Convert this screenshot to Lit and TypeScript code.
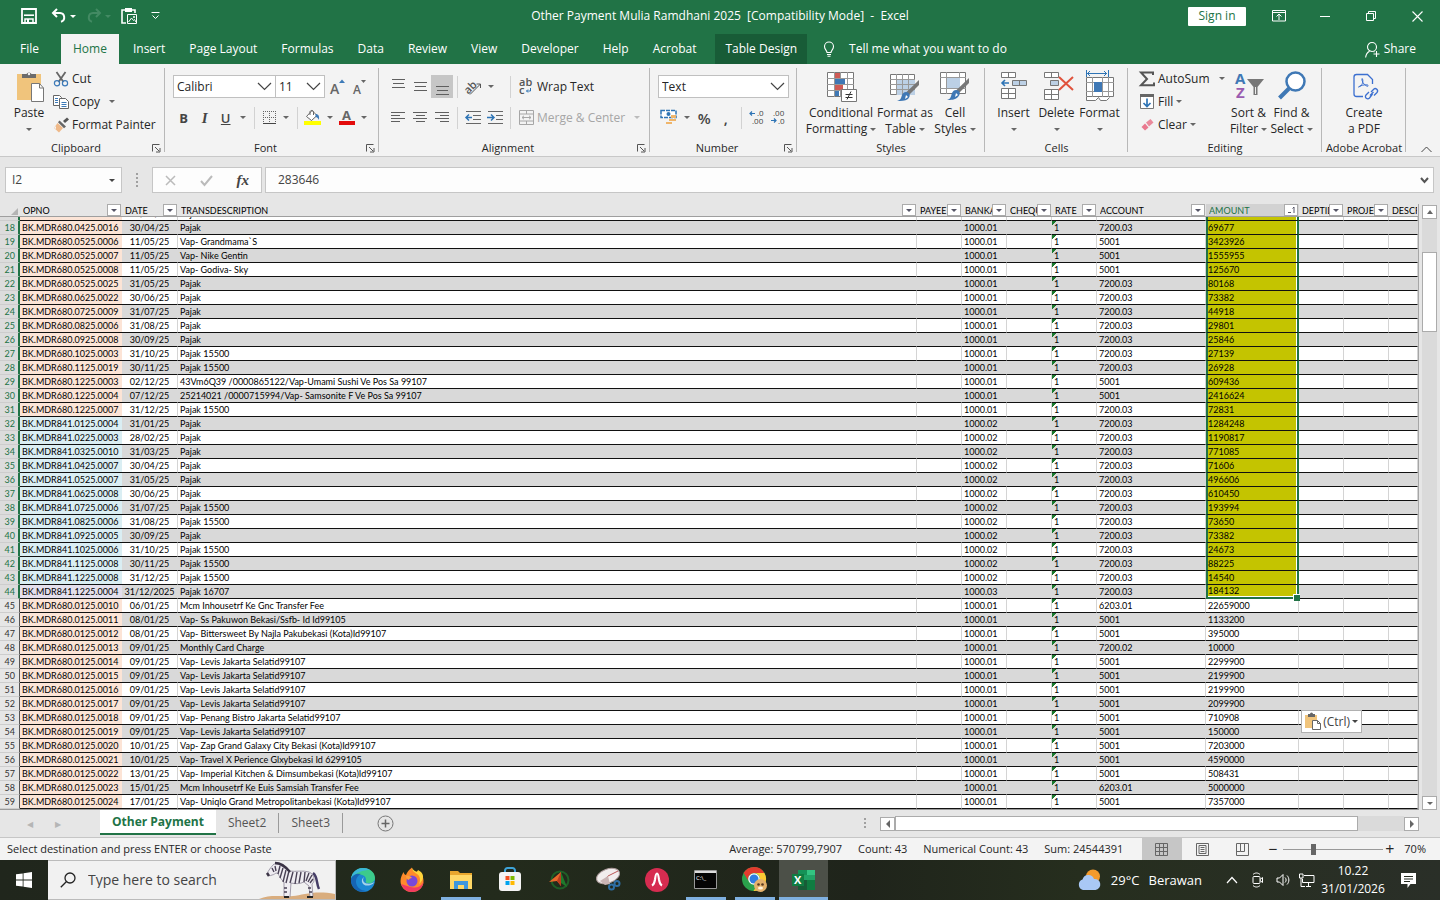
import { LitElement, html, svg, css, nothing } from "lit";
import { customElement, state } from "lit/decorators.js";
import { classMap } from "lit/directives/class-map.js";

type Row = [number, string, string, string, string, string, string];

const P = "BK.MDR680.";
const M = "BK.MDR841.";
const rows: Row[] = [
  [18, P + "0425.0016", "30/04/25", "Pajak", "1000.01", "7200.03", "69677"],
  [19, P + "0525.0006", "11/05/25", "Vap- Grandmama`S", "1000.01", "5001", "3423926"],
  [20, P + "0525.0007", "11/05/25", "Vap- Nike Gentin", "1000.01", "5001", "1555955"],
  [21, P + "0525.0008", "11/05/25", "Vap- Godiva- Sky", "1000.01", "5001", "125670"],
  [22, P + "0525.0025", "31/05/25", "Pajak", "1000.01", "7200.03", "80168"],
  [23, P + "0625.0022", "30/06/25", "Pajak", "1000.01", "7200.03", "73382"],
  [24, P + "0725.0009", "31/07/25", "Pajak", "1000.01", "7200.03", "44918"],
  [25, P + "0825.0006", "31/08/25", "Pajak", "1000.01", "7200.03", "29801"],
  [26, P + "0925.0008", "30/09/25", "Pajak", "1000.01", "7200.03", "25846"],
  [27, P + "1025.0003", "31/10/25", "Pajak 15500", "1000.01", "7200.03", "27139"],
  [28, P + "1125.0019", "30/11/25", "Pajak 15500", "1000.01", "7200.03", "26928"],
  [29, P + "1225.0003", "02/12/25", "43Vm6Q39 /0000865122/Vap-Umami Sushi Ve Pos Sa 99107", "1000.01", "5001", "609436"],
  [30, P + "1225.0004", "07/12/25", "25214021 /0000715994/Vap- Samsonite F Ve Pos Sa 99107", "1000.01", "5001", "2416624"],
  [31, P + "1225.0007", "31/12/25", "Pajak 15500", "1000.01", "7200.03", "72831"],
  [32, M + "0125.0004", "31/01/25", "Pajak", "1000.02", "7200.03", "1284248"],
  [33, M + "0225.0003", "28/02/25", "Pajak", "1000.02", "7200.03", "1190817"],
  [34, M + "0325.0010", "31/03/25", "Pajak", "1000.02", "7200.03", "771085"],
  [35, M + "0425.0007", "30/04/25", "Pajak", "1000.02", "7200.03", "71606"],
  [36, M + "0525.0007", "31/05/25", "Pajak", "1000.02", "7200.03", "496606"],
  [37, M + "0625.0008", "30/06/25", "Pajak", "1000.02", "7200.03", "610450"],
  [38, M + "0725.0006", "31/07/25", "Pajak 15500", "1000.02", "7200.03", "193994"],
  [39, M + "0825.0006", "31/08/25", "Pajak 15500", "1000.02", "7200.03", "73650"],
  [40, M + "0925.0005", "30/09/25", "Pajak", "1000.02", "7200.03", "73382"],
  [41, M + "1025.0006", "31/10/25", "Pajak 15500", "1000.02", "7200.03", "24673"],
  [42, M + "1125.0008", "30/11/25", "Pajak 15500", "1000.02", "7200.03", "88225"],
  [43, M + "1225.0008", "31/12/25", "Pajak 15500", "1000.02", "7200.03", "14540"],
  [44, M + "1225.0004", "31/12/2025", "Pajak 16707", "1000.03", "7200.03", "184132"],
  [45, P + "0125.0010", "06/01/25", "Mcm Inhousetrf Ke Gnc Transfer Fee", "1000.01", "6203.01", "22659000"],
  [46, P + "0125.0011", "08/01/25", "Vap- Ss Pakuwon Bekasi/Ssfb- Id Id99105", "1000.01", "5001", "1133200"],
  [47, P + "0125.0012", "08/01/25", "Vap- Bittersweet By Najla Pakubekasi (Kota)Id99107", "1000.01", "5001", "395000"],
  [48, P + "0125.0013", "09/01/25", "Monthly Card Charge", "1000.01", "7200.02", "10000"],
  [49, P + "0125.0014", "09/01/25", "Vap- Levis Jakarta Selatid99107", "1000.01", "5001", "2299900"],
  [50, P + "0125.0015", "09/01/25", "Vap- Levis Jakarta Selatid99107", "1000.01", "5001", "2199900"],
  [51, P + "0125.0016", "09/01/25", "Vap- Levis Jakarta Selatid99107", "1000.01", "5001", "2199900"],
  [52, P + "0125.0017", "09/01/25", "Vap- Levis Jakarta Selatid99107", "1000.01", "5001", "2099900"],
  [53, P + "0125.0018", "09/01/25", "Vap- Penang Bistro Jakarta Selatid99107", "1000.01", "5001", "710908"],
  [54, P + "0125.0019", "09/01/25", "Vap- Levis Jakarta Selatid99107", "1000.01", "5001", "150000"],
  [55, P + "0125.0020", "10/01/25", "Vap- Zap Grand Galaxy City Bekasi (Kota)Id99107", "1000.01", "5001", "7203000"],
  [56, P + "0125.0021", "10/01/25", "Vap- Travel X Perience Glxybekasi Id 6299105", "1000.01", "5001", "4590000"],
  [57, P + "0125.0022", "13/01/25", "Vap- Imperial Kitchen & Dimsumbekasi (Kota)Id99107", "1000.01", "5001", "508431"],
  [58, P + "0125.0023", "15/01/25", "Mcm Inhousetrf Ke Euis Samsiah Transfer Fee", "1000.01", "6203.01", "5000000"],
  [59, P + "0125.0024", "17/01/25", "Vap- Uniqlo Grand Metropolitanbekasi (Kota)Id99107", "1000.01", "5001", "7357000"],
];

const columns = ["OPNO", "DATE", "TRANSDESCRIPTION", "PAYEE", "BANKA", "CHEQU", "RATE", "ACCOUNT", "AMOUNT", "DEPTID", "PROJEC", "DESCR"];
const lastSelected = 44;

const ico = (w: number, h: number, body: unknown) =>
  html`<svg width=${w} height=${h} viewBox="0 0 ${w} ${h}" fill="none" aria-hidden="true">${body}</svg>`;

const arrow = html`<span class="arrow"></span>`;
const chevron = ico(15, 9, svg`<path d="M1 1l6.500 6.500L14 1" stroke="#444" stroke-width="1.200"/>`);
const launcher = html`<button class="launch" aria-label="More options">${ico(9, 9, svg`<path d="M.5 7.500v-7h7M3 3l4 4M8 4v4H4" stroke="#555"/>`)}</button>`;

const vertical = (y: number) =>
  ico(15, 18, [0, 1, 2].map((i) => svg`<path d="M${i === 1 ? 2 : 1} ${y + i * 4 + 0.5}H${i === 1 ? 13 : 14}" stroke="#5f5f5f"/>`));
const horizontal = (a: number, b: number) =>
  ico(15, 14, [0, 1, 2, 3].map((i) => svg`<path d="M${i % 2 ? a : 0} ${i * 3 + 1.5}H${i % 2 ? b : 14}" stroke="#5f5f5f"/>`));

const icons = {
  save: ico(16, 16, svg`<path d="M1 1h14v14H1z" stroke="#fff" stroke-width="1.800"/><path d="M3 7.200h10" stroke="#fff" stroke-width="1.600"/><path d="M4 15v-4h8v4" stroke="#fff" stroke-width="1.500"/><path d="M6 11h2v4H6z" fill="#fff"/>`),
  undo: ico(16, 16, svg`<path d="M6 1L2 5l4 4M2.500 5H9a4.500 4.500 0 0 1 1 8.800" stroke="#fff" stroke-width="2"/>`),
  redo: ico(16, 16, svg`<path d="M10 1l4 4-4 4M13.500 5H7a4.500 4.500 0 0 0-1 8.800" stroke="#438a63" stroke-width="2"/>`),
  pasteSpecial: ico(16, 16, svg`<path d="M4 2H1v13h4M11 2h3v3" stroke="#fff" stroke-width="1.600"/><path d="M4 0h7v4H4z" fill="#fff"/><path d="M6.500 6.500h9v9h-9z" stroke="#fff"/><path d="M7.500 14l3-4 2 2.500 1-1 1.500 2.500" stroke="#fff"/><circle cx="13" cy="9" r="1" fill="#fff"/>`),
  customize: ico(9, 8, svg`<path d="M.5.5h8M1.500 3.500L4.500 6.500l3-3" stroke="#fff"/>`),
  ribbonMode: ico(14, 12, svg`<path d="M.5.500h13v10.500H.5zM.5 2.500h13M7 10V4.500M4.500 6.500L7 4l2.500 2.500" stroke="#fff"/>`),
  min: ico(10, 10, svg`<path d="M0 5.500h10" stroke="#fff"/>`),
  restore: ico(10, 10, svg`<path d="M.5 2.500h7v7h-7zM2.500 2.500v-2h7v7h-2" stroke="#fff"/>`),
  close: ico(11, 11, svg`<path d="M.5.500l10 10M10.500.500l-10 10" stroke="#fff" stroke-width="1.100"/>`),
  bulb: ico(12, 16, svg`<path d="M4 11.500c0-2-2.500-3-2.500-6a4.500 4.500 0 0 1 9 0c0 3-2.500 4-2.500 6zM4 13.500h4M4.500 15.300h3" stroke="#fff" stroke-width="1.100"/>`),
  share: ico(15, 17, svg`<circle cx="7" cy="6" r="4.500" stroke="#fff" stroke-width="1.100"/><path d="M.6 16.500c.4-3.500 2-5.300 4-6.300M8.500 10.500l1 .5M11.500 10v6M8.500 13h6" stroke="#fff" stroke-width="1.100"/>`),
  paste: ico(30, 32, svg`<path d="M3 4h24v26H3z" fill="#f0c47c"/><path d="M8 4h4.500a2.800 2.800 0 0 1 5 0H22v4H8z" fill="#6b6b6b"/><circle cx="15" cy="4" r="1.200" fill="#f3f3f3"/><path d="M17.500 13.500h8l4 4.500v13.500h-12z" fill="#fff" stroke="#777"/><path d="M25.500 13.500V18h4" stroke="#777"/>`),
  cut: ico(16, 16, svg`<path d="M3.500 1l7 10M12.500 1l-7 10" stroke="#666" stroke-width="1.800"/><circle cx="4" cy="12.300" r="2.600" stroke="#3d7ab8" stroke-width="1.200"/><circle cx="12" cy="12.300" r="2.600" stroke="#3d7ab8" stroke-width="1.200"/>`),
  copy: ico(16, 16, svg`<path d="M.5 1.500h6l2 2v8h-8z" fill="#fff" stroke="#666"/><path d="M6.500 4.500h6l3 3v7h-9z" fill="#fff" stroke="#666"/><path d="M2 4.500h3M2 6.500h3M2 8.500h3M8.500 8.500h5M8.500 10.500h5M8.500 12.500h5" stroke="#3d7ab8"/>`),
  painter: ico(16, 16, svg`<path d="M10 4l4-3.500 2 2L12 6z" fill="#555"/><path d="M6.500 3.500l6.500 6-2 1.800-6-6z" fill="#666"/><path d="M4.500 6l5.500 5-4 4.500L1 11z" fill="#efb989"/><path d="M1 11l2-2v3z" fill="#f3f3f3"/>`),
  growA: ico(16, 18, svg`<text x="0" y="16" font-size="14" font-weight="600" fill="#666">A</text><path d="M9 5l3-3.500L15 5z" fill="#3d7ab8"/>`),
  shrinkA: ico(14, 18, svg`<text x="0" y="16" font-size="12" font-weight="600" fill="#666">A</text><path d="M8 2h5l-2.500 3z" fill="#666"/>`),
  border: ico(13, 13, svg`<path d="M.5 0v12M6.500 0v12M12.500 0v12M0 .5h13M0 6.500h13" stroke="#666" stroke-dasharray="1 1"/><path d="M0 12.500h13" stroke="#444"/>`),
  fill: ico(17, 17, svg`<path d="M8 1.500L2.500 7.500l5 4 5.500-5z" fill="#fff" stroke="#666"/><path d="M6 6V2.500a2 2 0 0 1 3.500 0V6" stroke="#666"/><path d="M11.500 5c3 0 4 2 3.500 6-1-2-2-3-3.500-3z" fill="#3d7ab8"/><path d="M0 12h17v4H0z" fill="#ff0"/>`),
  fontColor: ico(16, 17, svg`<text x="3" y="11" font-size="13" font-weight="700" fill="#666">A</text><path d="M0 12h16v4H0z" fill="#e30b0b"/>`),
  orient: ico(17, 16, svg`<text x="0" y="12" font-size="11" font-weight="600" fill="#555" transform="rotate(-45 6 10)">ab</text><path d="M5 15.500L15.500 5M11.500 5h4v4" stroke="#555"/>`),
  outdent: ico(17, 14, svg`<path d="M1 .5h15M8 4.500h8M8 8.500h8M1 12.500h15" stroke="#666"/><path d="M7 6.500H1M4 3.500l-3 3 3 3" stroke="#2e74b5" stroke-width="1.500"/>`),
  indent: ico(17, 14, svg`<path d="M1 .5h15M9 4.500h7M9 8.500h7M1 12.500h15" stroke="#666"/><path d="M0 6.500h6.500M4 3.500l3 3-3 3" stroke="#2e74b5" stroke-width="1.500"/>`),
  wrap: ico(15, 17, svg`<text x="0" y="8" font-size="11" font-weight="600" fill="#555">ab</text><text x="0" y="16" font-size="11" font-weight="600" fill="#555">c</text><path d="M11.500 10v3H7.500M9 11.500L7.500 13 9 14.500" stroke="#2e74b5"/>`),
  merge: ico(15, 16, svg`<path d="M.5.500h14v14H.5zM.5 4h14M.5 11h14M7.500.5V4M7.500 11v3.500M3 7.500h9M5 5.800L3 7.500l2 1.700M10 5.800l2 1.700-2 1.700" stroke="#a6a6a6"/>`),
  currency: ico(17, 17, svg`<path d="M1 1.500h15v7H1z" fill="#fff" stroke="#2e74b5" stroke-width="1.500" stroke-dasharray="4 1"/><circle cx="8.500" cy="5" r="2" fill="#2e74b5"/><path d="M11 6h5v3h-5zM9 10h7v2H9zM6 13h6v2H6z" fill="#efb56b"/>`),
  incDec: ico(16, 17, svg`<text x="8" y="7" font-size="8" fill="#444">.0</text><text x="3" y="15" font-size="8" fill="#444">.00</text><path d="M6 4.500H1M3 2.500l-2 2 2 2" stroke="#2e74b5" stroke-width="1.200"/>`),
  decDec: ico(16, 17, svg`<text x="3" y="7" font-size="8" fill="#444">.00</text><text x="8" y="15" font-size="8" fill="#444">.0</text><path d="M1 11.500h5M4 9.500l2 2-2 2" stroke="#2e74b5" stroke-width="1.200"/>`),
  cond: ico(32, 32, svg`<path d="M2.500 2.500h26v24h-26z" fill="#fff" stroke="#777"/><path d="M2 8.500h27M2 14.500h27M2 20.500h27M9.500 2v25M22.500 2v25M15.500 2v25" stroke="#999"/><path d="M10 3h5v5h-5zM10 15h8v5h-8z" fill="#cf5b56"/><path d="M10 9h10v5H10zM10 21h4v5h-4z" fill="#3f78b5"/><path d="M16.500 19.500h15v12h-15z" fill="#fff" stroke="#777"/><path d="M20.500 24.500h7M20.500 27.500h7M26 21.500l-4 8" stroke="#333"/>`),
  fmtTable: ico(32, 32, svg`<path d="M1.500 4.500h24v20h-24z" fill="#fff" stroke="#777"/><path d="M8 10h18v15H8z" fill="#bcd0e5"/><path d="M1 9.500h25M1 14.500h25M1 19.500h25M7.500 4v21M13.500 4v21M19.500 4v21" stroke="#999"/><path d="M30 10v5L20 25l-3-2.500z" fill="#777"/><path d="M17 22c4 0 5 4 2 7-3 2-7 2-11 2 4-1 4-3 5-6 1-2 2-3 4-3z" fill="#3f78b5"/><path d="M17 25l2 2-3 2z" fill="#fff"/>`),
  cellStyle: ico(32, 32, svg`<path d="M1.500 2.500h25v21h-25z" fill="#fff" stroke="#777"/><path d="M1 7.500h26M1 18.500h26M7.500 2v22M20.500 2v6" stroke="#999"/><path d="M8 8h13v10H8z" fill="#bcd0e5"/><path d="M30 8v5L20 23l-3-2.500z" fill="#777"/><path d="M17 20c4 0 5 4 2 7-3 3-7 3-11 3 4-1 4-4 5-7 1-2 2-3 4-3z" fill="#3f78b5"/><path d="M17 23l2 2-3 2z" fill="#fff"/>`),
  insert: ico(28, 32, svg`<path d="M1.500 2.500h14v5h-14zM8.500 2.500v5M1.500 18.500h14v10h-14zM8.500 18.500v10M1.500 23.500h14" fill="#fff" stroke="#777"/><path d="M12.500 10.500h14v5h-14z" fill="#bcd0e5" stroke="#777"/><path d="M19.500 10.500v5" stroke="#777"/><path d="M9 13H2M5 10l-3 3 3 3" stroke="#2e74b5" stroke-width="1.600"/>`),
  del: ico(32, 32, svg`<path d="M3.500 2.500h14v5h-14zM10.500 2.500v5M3.500 19.500h14v10h-14zM10.500 19.500v10M3.500 24.500h14" fill="#fff" stroke="#777"/><path d="M9.500 10.500h8v5h-8z" fill="#bcd0e5" stroke="#777"/><path d="M18 7l14 13M32 7L18 20" stroke="#e0533d" stroke-width="2"/>`),
  format: ico(30, 32, svg`<path d="M1.500 7.500h27v19h-27z" fill="#fff" stroke="#777"/><path d="M1 12.500h28M1 21.500h28M7.500 7v20M17.500 7v20M23.500 7v20" stroke="#999"/><path d="M9 12h8v10H9z" fill="#3f78b5"/><path d="M1.500 27v3.500h9l3-3 2 3h6l3-3" fill="#fff" stroke="#777"/><path d="M2 3.500h20M5 1L2.500 3.500 5 6M19 1l2.500 2.500L19 6M1.500 0v7M23.500 0v7" stroke="#2e74b5"/>`),
  sum: ico(16, 16, svg`<path d="M14 4V1.500H2L8 8l-6 6.200h13v-2.700" stroke="#555" stroke-width="2"/>`),
  fillDown: ico(16, 15, svg`<path d="M1.500 2.500h13v12h-13z" fill="#fff" stroke="#777"/><path d="M1 0h14v3H1z" fill="#666"/><path d="M8 4.500v8M4.500 9L8 12.500 11.500 9" stroke="#2e74b5" stroke-width="1.700"/>`),
  eraser: ico(16, 14, svg`<path d="M7 4.500L11.500 1l3 3.500-4.500 4z" fill="#ea8a9c"/><path d="M6 5.500l3.500 4L6 12.500 2.500 9z" fill="#e9788e"/>`),
  sort: ico(32, 32, svg`<text x="2" y="14" font-size="15" font-weight="700" fill="#3f78b5">A</text><text x="3" y="28" font-size="15" font-weight="700" fill="#9a5bb0">Z</text><path d="M14 9h17l-6.500 8v8h-4v-8z" fill="#777"/><path d="M22.500 17v7" stroke="#eee"/>`),
  find: ico(30, 32, svg`<circle cx="18.500" cy="11.500" r="9" fill="#fff" stroke="#3f78b5" stroke-width="2.500"/><path d="M12 18.500L2.500 28" stroke="#3f78b5" stroke-width="4"/>`),
  pdf: ico(28, 32, svg`<path d="M13 26.500H6.500a2.500 2.500 0 0 1-2.500-2.500V7a2.500 2.500 0 0 1 2.500-2.500h11l5 5V14" stroke="#3b6fd0" stroke-width="1.300"/><path d="M8.500 17c4-1 5-6 4-8s-1 3 2 5.500 4 2 3.500.8-7-.300-9.500 1.700z" stroke="#3b6fd0"/><path d="M21 22l3-3c1.500-1.500 5 1 3 3.500l-3 3M23.500 22L20 25.500M22.500 24l-3 4c-2 2-5.500-.5-3.500-3l3-3" stroke="#3b6fd0" stroke-width="1.300"/>`),
  clip: ico(16, 17, svg`<path d="M0 2h12v13H0z" fill="#f0c47c"/><path d="M3 1h2a1.500 1.500 0 0 1 3 0h2v3H3z" fill="#666"/><path d="M7.500 7.500h5l3 3v6h-8z" fill="#fff" stroke="#666"/><path d="M12.500 7.500v3h3" stroke="#666"/>`),
};

const taskIcons = [
  { name: "Edge", on: false, art: ico(26, 26, svg`<circle cx="13" cy="13" r="12" fill="#1b87d2"/><path d="M1 12C2 5 7 1 13 1c7 0 12 4.500 12 10 0 4-4 6-8 5-2-.5-1-2-1-3.500C16 9 12 7 8 8c-4 .8-6.500 3-7 4z" fill="#3ccb8c"/><path d="M1 12C2 5 7 1 13 1c3 0 5 .8 7 2C13 3 6 5 1 12z" fill="#3bb6d8"/><path d="M1 12c1-4 6-6 10-5-4 2-6 6-4.500 10.500S13 24 17 24C9 27 0 21 1 12z" fill="#1664b4"/><path d="M14 10c-2 3-.5 6 3 6.500s6-.5 7.500-1.500c-2 3-6 4-9 3.500-4-1.500-5-6-1.500-8.500z" fill="#dff2f3" opacity=".7"/>`) },
  { name: "Firefox", on: false, art: ico(26, 26, svg`<path d="M13 25C6 25 1.500 20 1.500 14c0-4 2-7 3-9 .5 2 1.500 3 2.500 3 1-3 3-5 6-7.500 0 3 2 4 4 5.500l1-2c5 2 6.500 6 6.500 10C24.500 20 20 25 13 25z" fill="#ff8a2b"/><path d="M13 1c0 3 2 4 5 6 3 2 4 6 2 10 5-4 5-9 2-12l-3-2-1 2c-2-1-4-2-5-4z" fill="#ffd43b"/><path d="M2 17c2 5 6 8 11 8 6 0 11-4 11.500-10-2 4-6 6-10 5.500S6 18 2 17z" fill="#f23a62"/><circle cx="13" cy="14" r="5.500" fill="#7a48d8"/><path d="M7 9c3-1 5 .5 6 2-2 0-3 1-3 2-2-.5-3-2-3-4z" fill="#ff9f3b"/>`) },
  { name: "File Explorer", on: true, art: ico(24, 22, svg`<path d="M1 2h8l2 2h12v16H1z" fill="#e9a72e"/><path d="M1 6h22v14H1z" fill="#ffd867"/><path d="M5 12h14v8H5z" fill="#3f97dd"/><path d="M9 16h6v4H9z" fill="#ffd867"/>`) },
  { name: "Store", on: false, art: ico(24, 26, svg`<path d="M7 6V3.500A2.500 2.500 0 0 1 9.500 1h5A2.500 2.500 0 0 1 17 3.500V6" stroke="#3ea4d8" stroke-width="2"/><rect x="1" y="5" width="22" height="19" rx="3" fill="#f4f4f4"/><path d="M7.500 9h4v4h-4z" fill="#f25022"/><path d="M12.500 9h4v4h-4z" fill="#7fba00"/><path d="M7.500 14h4v4h-4z" fill="#00a4ef"/><path d="M12.500 14h4v4h-4z" fill="#ffb900"/>`) },
  { name: "Corel", on: false, art: ico(24, 24, svg`<circle cx="13" cy="12" r="8.500" stroke="#1f5e27" stroke-width="2"/><path d="M14 4l6 15-6-4z" fill="#1f7a2b"/><path d="M14 4L2 14l8-1 4 5z" fill="#e8672a"/><path d="M14 4l0 14-4-5z" fill="#b93c1e"/>`) },
  { name: "Snipping Tool", on: false, art: ico(26, 26, svg`<ellipse cx="13" cy="9" rx="12" ry="7" transform="rotate(-20 13 9)" fill="#f1eded" stroke="#a99"/><path d="M13 9l10-5M13 9l-6 6" stroke="#b55" /><path d="M5 14l8-5 2 8-5 1z" fill="#c9b4b4"/><circle cx="16.500" cy="20" r="2.500" stroke="#2e6ea5" stroke-width="2"/><circle cx="22" cy="16.500" r="2.500" stroke="#2e6ea5" stroke-width="2"/>`) },
  { name: "Ask", on: false, art: ico(24, 24, svg`<circle cx="12" cy="12" r="12" fill="#d62c50"/><path d="M7 17.500c2-1 2.500-3 3-6 .5-4 1-6 2-6s1.500 2 2 6c.5 3 1 5 3 6" stroke="#fff" stroke-width="2.200"/>`) },
  { name: "Command Prompt", on: true, art: ico(24, 20, svg`<path d="M.5.500h22v18H.5z" fill="#050505" stroke="#999"/><path d="M1 1h21v2H1z" fill="#ddd"/><text x="2" y="10" font-size="6" fill="#fff">C:\\_</text>`) },
  { name: "Chrome", on: true, art: ico(28, 26, svg`<circle cx="13" cy="12" r="12" fill="#2ba24c"/><path d="M2.600 6A12 12 0 0 1 23.400 6H13a6 6 0 0 0-5.500 8z" fill="#e33b2e"/><path d="M23.400 6A12 12 0 0 1 12.500 24l5.700-9A6 6 0 0 0 13 6z" fill="#fcc934"/><circle cx="13" cy="12" r="5.800" fill="#fff"/><circle cx="13" cy="12" r="4.500" fill="#2f7de1"/><circle cx="19.500" cy="18.500" r="6.500" fill="#e4b16c"/><circle cx="17.500" cy="17.500" r="1.300" fill="#5a3a22"/><circle cx="21.500" cy="17.500" r="1.300" fill="#5a3a22"/><ellipse cx="19.500" cy="21" rx="2.500" ry="1.500" fill="#fff3dd"/>`) },
  { name: "Excel", on: true, art: ico(24, 22, svg`<path d="M6 1h17v20H6z" fill="#21a366"/><path d="M6 1h9v5H6z" fill="#159257"/><path d="M15 1h8v5h-8z" fill="#33c481"/><path d="M6 11h9v5H6z" fill="#185c37"/><path d="M15 11h8v10h-8z" fill="#107c41"/><path d="M6 16h9v5H6z" fill="#185c37"/><path d="M0 5h12v12H0z" fill="#107c41"/><text x="2" y="15" font-size="11" font-weight="700" fill="#fff">X</text>`) },
];

const zebra = ico(76, 38, svg`
  <path d="M0 38c12-5 22-2 34-3 10-1 22-6 42-2v5z" fill="#d9ad7e"/>
  <path d="M8 13c1-3 4-7 7-10l3 0c5 1 8 5 12 7 7 1 14-1 20 1 3 1 5 4 5 8 0 2-1 3-2 4l1 13h-3l-1-11-5-4c-4 2-9 2-13 1l-1 14h-2l-1-1-1 1h-2l0-15c-4-3-5-8-7-9-2 0-3 2-5 2-2 1-3 1-5-1z" fill="#efedf2" stroke="#8d8698" stroke-width=".8"/>
  <path d="M16 2c7 0 11 4 15 9" stroke="#3a3345" stroke-width="2.500"/>
  <path d="M8 12l2 3" stroke="#3a3345" stroke-width="2.500"/>
  <path d="M13 7l2 4M16 5l1 5M21 5l-2 8M24 7l-3 10M27 9l-3 12M30 10l-3 12M34 11l-3 11M38 11l-2 12M42 11l-2 11M46 11l-1 10M50 12l-3 8M53 14l-4 7M54 18l-3 4M25 27h3M25 31h3M49 27h3M50 31h3" stroke="#494155" stroke-width="1.400"/>
  <path d="M54 12c5 4 3 10 6 16" stroke="#453d66" stroke-width="2.500"/>
  <path d="M25 36h5M48 36h6" stroke="#222" stroke-width="2"/>`);

@customElement("app-root")
export class AppRoot extends LitElement {
  @state() private sheet = "Other Payment";

  static styles = css`
    :host { display: flex; flex-direction: column; min-height: 100vh; background: #e6e6e6; color: #262626; font-family: "Open Sans", "Noto Sans", sans-serif; font-size: 12px; line-height: 16px; overflow: hidden; }
    * { box-sizing: border-box; }
    button, input, select { font: inherit; color: inherit; background: none; border: 0; margin: 0; padding: 0; border-radius: 0; outline: 0; appearance: none; }
    svg { display: block; flex: none; overflow: visible; }
    svg text { font-family: "Open Sans", sans-serif; }
    .arrow { flex: none; width: 0; height: 0; border: 3px solid transparent; border-top-color: currentColor; border-bottom: 0; }

    .title { display: grid; grid-template-columns: 1fr auto 1fr; align-items: center; height: 32px; background: #217346; color: #fff; }
    .quick { display: flex; align-items: center; gap: 10px; padding-left: 21px; }
    .quick button { display: flex; align-items: center; gap: 3px; }
    .quick .wide { margin-left: 4px; }
    .dim { color: #438a63; }
    .win { display: flex; align-items: center; justify-content: flex-end; }
    .win button { width: 46px; height: 32px; display: grid; place-items: center; }
    .win .signin { width: 58px; height: 19px; margin-right: 10px; background: #fff; color: #217346; border-radius: 1px; }
    .tabs { display: flex; height: 32px; padding: 2px 24px 0 0; background: #217346; color: #fff; }
    .tabs button { height: 30px; padding: 0 12px; display: flex; align-items: center; white-space: nowrap; }
    .tabs .file { width: 61px; padding: 0 0 0 20px; }
    .tabs .active { background: #f3f3f3; color: #217346; margin-right: 2px; }
    .tabs .design { background: #185c37; padding: 0 10px; margin-left: 7px; }
    .tabs .tell { gap: 14px; padding-left: 16px; }
    .tabs .share { margin-left: auto; gap: 4px; padding: 0; }

    .ribbon { display: flex; height: 93px; background: #f3f3f3; border-bottom: 1px solid #c8c8c8; }
    .ribbon .arrow { border-top-color: #666; }
    .group { position: relative; flex: none; display: flex; flex-direction: column; padding-top: 3px; }
    .group::after { content: ""; position: absolute; right: 0; top: 4px; bottom: 4px; width: 1px; background: #b8b8b8; }
    .g-clip { width: 165px; } .g-font { width: 214px; } .g-align { width: 271px; } .g-num { width: 147px; }
    .g-style { width: 188px; } .g-cells { width: 143px; } .g-edit { width: 194px; } .g-pdf { width: 84px; }
    .caption { display: flex; align-items: center; height: 16px; margin-top: auto; font-size: 11px; }
    .caption span { flex: 1; text-align: center; white-space: nowrap; }
    .launch { width: 9px; margin-right: 4px; }
    .body { display: flex; flex: 1; }
    .big { display: flex; flex-direction: column; align-items: center; padding-top: 3px; white-space: nowrap; }
    .big svg { margin-bottom: 3px; }
    .big .l2 { display: flex; align-items: center; gap: 3px; height: 16px; }
    .stack { display: flex; flex-direction: column; }
    .stack button { display: flex; align-items: center; gap: 3px; height: 23px; white-space: nowrap; }
    .stack .far { margin-left: 6px; }
    .g-clip .body { padding-left: 13px; gap: 8px; } .g-clip .big { width: 32px; }
    .tools { display: flex; flex-direction: column; gap: 8px; padding: 8px 8px 0; }
    .line { display: flex; align-items: center; height: 23px; }
    .t { width: 22px; height: 23px; display: grid; place-items: center; font-size: 13px; color: #444; }
    .t.on { background: #c6c6c6; }
    .t.a { width: 14px; }
    .gap { width: 8px; }
    .b { font-weight: 700; } .i { font-style: italic; font-weight: 600; font-family: "Liberation Serif", serif; font-size: 15px; } .u { text-decoration: underline; font-weight: 600; }
    .pct { font-size: 15px; font-weight: 600; }
    .sep { width: 1px; height: 22px; background: #d2d2d2; margin: 0 4px; }
    .lbl { display: flex; align-items: center; gap: 3px; padding-left: 4px; white-space: nowrap; }
    .lbl.off { color: #a6a6a6; } .lbl .arrow { margin-left: 6px; border-top-color: #bbb; }
    .combo { display: grid; align-items: center; height: 23px; background: #fff; border: 1px solid #c0c0c0; }
    .combo select { grid-area: 1 / 1; width: 100%; padding-left: 3px; }
    .combo svg { grid-area: 1 / 1; justify-self: end; margin-right: 3px; pointer-events: none; }
    .c1 { width: 104px; } .c2 { width: 51px; margin-left: -1px; margin-right: 2px; } .c3 { width: 131px; }
    .g-style .body { padding-left: 6px; } .g-cells .body { padding-left: 7px; } .g-edit .body { padding-left: 11px; } .g-pdf .body { justify-content: center; }
    .w1 { width: 76px; } .w2 { width: 52px; } .w3 { width: 48px; } .w4 { width: 43px; }
    .g-edit .stack { width: 88px; }
    .collapse { display: flex; align-items: flex-end; margin: 0 8px 3px auto; }

    .formula { display: flex; height: 47px; padding: 10px 6px 11px 5px; }
    .box { display: flex; align-items: center; height: 26px; background: #fdfdfd; border: 1px solid #c6c6c6; color: #444; }
    .name { width: 117px; padding: 0 6px; } .name input { flex: 1; min-width: 0; }
    .dots { width: 30px; display: grid; place-items: center; }
    .fxs { width: 110px; justify-content: space-around; }
    .fx { font: italic 600 15px "Liberation Serif", serif; }
    .entry { flex: 1; margin-left: 3px; padding: 0 4px 0 12px; } .entry input { flex: 1; min-width: 0; }

    .area { position: relative; display: flex; flex: 1; align-items: flex-start; }
    .sheet { flex: 1; min-width: 0; border-right: 1px solid #a6a6a6; border-bottom: 1px solid #9a9a9a; }
    table { width: 100%; table-layout: fixed; border-collapse: separate; border-spacing: 0; font: 9px/13px "Lato", "Noto Sans", sans-serif; color: #000; }
    th, td { padding: 0 0 0 2px; text-align: left; font-weight: 400; white-space: nowrap; overflow: hidden; }
    thead th { height: 13px; border-bottom: 1px solid #9f9f9f; padding: 0 1px 0 3px; background: #e6e6e6; }
    thead th.hot { background: #d2d2d2; color: #217346; }
    .hd { display: flex; align-items: center; justify-content: space-between; height: 12px; overflow: hidden; }
    .hd span:first-child { flex: 1; min-width: 0; overflow: hidden; }
    .flt { width: 14px; height: 12px; flex: none; display: grid; place-items: center; background: #fff; border: 1px solid #ababab; color: #556; }
    .c-n { width: 20px; } .c-op { width: 102px; } .c-d { width: 56px; } .c-s { width: 45px; } .c-acc { width: 109px; } .c-amt { width: 93px; } .c-e { width: 29px; }
    tbody td { height: 14px; border-bottom: 1px solid #111; border-right: 1px solid #d4d4d4; background: #fff; }
    tbody tr.even td { background: #d9d9d9; border-right-color: #d9d9d9; }
    tbody td.date { text-align: center; padding: 0; }
    tbody th { height: 14px; padding: 0 4px 0 0; text-align: right; border-bottom: 1px solid #cdcdcd; border-right: 1px solid #555; background: #e6e6e6; color: #333; }
    tbody tr.sel th { background: #dcdcdc; color: #217346; border-right: 2px solid #217346; padding-right: 3px; }
    tbody tr td.op, tbody tr.even td.op { background: #fce4d6; border-right: 0; }
    tbody tr td.op.blue { background: #daeef3; } tbody tr td.op.lilac { background: #e4dfec; }
    tbody tr td.rate { background-image: linear-gradient(135deg, #1a7a2e 3px, transparent 3px); }
    tbody tr.sel td.amt { background: #c4c400; border-right: 2px solid #217346; border-left: 2px solid #217346; padding-left: 0; box-shadow: inset -1px 0 #fff; }
    tbody tr.last td.amt { position: relative; overflow: visible; border-bottom: 2px solid #217346; box-shadow: inset -1px -1px #fff; line-height: 12px; }
    tr.last td.amt::after { content: ""; position: absolute; right: -3px; bottom: -4px; width: 6px; height: 6px; background: #217346; border: 1px solid #fff; border-width: 1px 0 0 1px; }
    .clip { display: flex; align-items: flex-end; height: 3px; overflow: hidden; }
    .date .clip { justify-content: center; }
    tbody tr.part td, tbody tr.part th { height: 4px; }
    .pasteopt { position: absolute; right: 78px; bottom: 77px; display: flex; align-items: center; gap: 2px; height: 23px; padding: 0 3px; background: #fff; border: 1px solid #b0b0b0; color: #444; }
    .vbar { width: 21px; padding: 1px 3px 0 3px; display: flex; flex-direction: column; align-self: stretch; background: #e6e6e6; }
    .sb { width: 15px; height: 14px; flex: none; display: grid; place-items: center; background: #fff; border: 1px solid #ababab; color: #666; }
    .up { border-top: 0; border-bottom: 4px solid currentColor; }
    .vtrack { flex: 1; background: #dadada; } .vthumb { height: 80px; margin-top: 33px; background: #fff; border: 1px solid #ababab; }

    .sheets { display: flex; height: 28px; border-bottom: 1px solid #c6c6c6; color: #555; }
    .nav { width: 100px; display: flex; align-items: center; gap: 22px; padding-left: 27px; font-size: 8px; color: #b5b5b5; }
    .sheets .tab { height: 20px; margin-top: 3px; padding: 0 12px; border-right: 1px solid #9a9a9a; }
    .sheets .tab.on { height: 25px; margin-top: 0; background: #fff; color: #217346; font-weight: 700; border: 0; border-bottom: 2px solid #217346; }
    .add { margin-left: 34px; }
    .hbar { display: flex; align-items: center; margin-left: auto; width: 40%; padding-right: 21px; }
    .hbar .grip { width: 16px; } .htrack { flex: 1; height: 15px; background: #dadada; } .hthumb { width: 91%; height: 15px; background: #fff; border: 1px solid #ababab; }
    .lf { border: 4px solid transparent; border-right: 4px solid currentColor; border-left: 0; } .rt { border: 4px solid transparent; border-left: 4px solid currentColor; border-right: 0; }

    .status { display: flex; align-items: center; height: 22px; padding: 0 14px 0 7px; background: #f3f3f3; font-size: 11px; }
    .sums { display: flex; gap: 16px; margin-left: auto; margin-right: 19px; white-space: nowrap; }
    .view { width: 40px; height: 22px; display: grid; place-items: center; } .view.on { background: #c6c6c6; }
    .zoom { display: flex; align-items: center; gap: 1px; margin-left: 5px; } .zoom button { width: 11px; font-size: 16px; }
    .zoom input { width: 100px; height: 14px; margin-left: 4px; background: linear-gradient(#999, #999) center / 100% 1px no-repeat; }
    .zoom input::-webkit-slider-thumb { appearance: none; width: 5px; height: 11px; background: #666; }
    .zoom output { margin-left: 8px; }

    .taskbar { display: flex; height: 40px; background: linear-gradient(90deg, #20261c, #232b1c 35%, #1f241b 60%, #262e1e 75%, #2a2f28); color: #fff; }
    .start { width: 48px; display: grid; place-items: center; }
    .search { display: flex; align-items: center; width: 288px; padding-left: 12px; gap: 12px; background: #f1f1f1; border: 1px solid #bbb; border-left: 0; color: #444; font-size: 14px; }
    .search input { flex: 1; min-width: 0; } .search input::placeholder { color: #444; opacity: 1; }
    .zeb { align-self: flex-end; }
    .apps { display: flex; padding-left: 2px; }
    .apps button { width: 49px; display: grid; place-items: center; }
    .apps .run { background: linear-gradient(#7fb0e0, #7fb0e0) bottom / 40px 3px no-repeat; }
    .apps .cur { background: linear-gradient(#7fb0e0, #7fb0e0) bottom / 100% 3px no-repeat #4c5048; }
    .tray { display: flex; align-items: center; margin-left: auto; padding-right: 24px; font-size: 13px; white-space: nowrap; }
    .weather { display: flex; align-items: center; gap: 9px; margin-right: 24px; }
    .trayico { display: flex; align-items: center; gap: 7px; }
    .clock { width: 76px; text-align: center; font-size: 12px; line-height: 18px; margin-right: 10px; }
  `;

  private big(icon: unknown, a: string, b: string | null, cls: string, drop = true) {
    return html`<button class="big ${cls}">${icon}<span>${a}</span><span class="l2">${b ?? nothing}${drop ? arrow : nothing}</span></button>`;
  }
  private caption(t: string, l = false) {
    return html`<div class="caption"><span>${t}</span>${l ? launcher : nothing}</div>`;
  }

  private renderRibbon() {
    return html`<div class="ribbon">
      <section class="group g-clip">
        <div class="body">
          ${this.big(icons.paste, "Paste", null, "")}
          <div class="stack">
            <button>${icons.cut}Cut</button>
            <button>${icons.copy}Copy<span class="arrow far"></span></button>
            <button>${icons.painter}Format Painter</button>
          </div>
        </div>${this.caption("Clipboard", true)}
      </section>
      <section class="group g-font">
        <div class="tools">
          <div class="line">
            <span class="combo c1"><select aria-label="Font"><option>Calibri</option></select>${chevron}</span>
            <span class="combo c2"><select aria-label="Font size"><option>11</option></select>${chevron}</span>
            <button class="t" aria-label="Increase font size">${icons.growA}</button><button class="t" aria-label="Decrease font size">${icons.shrinkA}</button>
          </div>
          <div class="line">
            <button class="t b">B</button><button class="t i">I</button><button class="t u">U</button><button class="t a" aria-label="Underline style">${arrow}</button>
            <span class="sep"></span><button class="t" aria-label="Borders">${icons.border}</button><button class="t a" aria-label="Border style">${arrow}</button>
            <span class="sep"></span><button class="t" aria-label="Fill color">${icons.fill}</button><button class="t a" aria-label="Fill colors">${arrow}</button>
            <button class="t" aria-label="Font color">${icons.fontColor}</button><button class="t a" aria-label="Font colors">${arrow}</button>
          </div>
        </div>${this.caption("Font", true)}
      </section>
      <section class="group g-align">
        <div class="tools">
          <div class="line">
            <button class="t" aria-label="Top align">${vertical(1)}</button><button class="t" aria-label="Middle align">${vertical(4)}</button><button class="t on" aria-label="Bottom align">${vertical(8)}</button>
            <span class="sep"></span><button class="t" aria-label="Orientation">${icons.orient}</button><button class="t a" aria-label="Orientation options">${arrow}</button>
            <span class="gap"></span><span class="sep"></span><button class="lbl">${icons.wrap}Wrap Text</button>
          </div>
          <div class="line">
            <button class="t" aria-label="Align left">${horizontal(0, 9)}</button><button class="t" aria-label="Center">${horizontal(3, 12)}</button><button class="t" aria-label="Align right">${horizontal(5, 14)}</button>
            <span class="sep"></span><button class="t" aria-label="Decrease indent">${icons.outdent}</button><button class="t" aria-label="Increase indent">${icons.indent}</button>
            <span class="sep"></span><button class="lbl off" disabled>${icons.merge}Merge &amp; Center${arrow}</button>
          </div>
        </div>${this.caption("Alignment", true)}
      </section>
      <section class="group g-num">
        <div class="tools">
          <div class="line"><span class="combo c3"><select aria-label="Number format"><option>Text</option></select>${chevron}</span></div>
          <div class="line">
            <button class="t" aria-label="Accounting format">${icons.currency}</button><button class="t a" aria-label="Currency">${arrow}</button>
            <button class="t pct">%</button><button class="t pct">,</button><span class="sep"></span>
            <button class="t" aria-label="Increase decimal">${icons.incDec}</button><button class="t" aria-label="Decrease decimal">${icons.decDec}</button>
          </div>
        </div>${this.caption("Number", true)}
      </section>
      <section class="group g-style">
        <div class="body">${this.big(icons.cond, "Conditional", "Formatting", "w1")}${this.big(icons.fmtTable, "Format as", "Table", "w2")}${this.big(icons.cellStyle, "Cell", "Styles", "w3")}</div>
        ${this.caption("Styles")}
      </section>
      <section class="group g-cells">
        <div class="body">${this.big(icons.insert, "Insert", null, "w4")}${this.big(icons.del, "Delete", null, "w4")}${this.big(icons.format, "Format", null, "w4")}</div>
        ${this.caption("Cells")}
      </section>
      <section class="group g-edit">
        <div class="body">
          <div class="stack">
            <button>${icons.sum}AutoSum<span class="arrow far"></span></button>
            <button>${icons.fillDown}Fill${arrow}</button>
            <button>${icons.eraser}Clear${arrow}</button>
          </div>
          ${this.big(icons.sort, "Sort &", "Filter", "w4")}${this.big(icons.find, "Find &", "Select", "w4")}
        </div>${this.caption("Editing")}
      </section>
      <section class="group g-pdf">
        <div class="body">${this.big(icons.pdf, "Create", "a PDF", "", false)}</div>${this.caption("Adobe Acrobat")}
      </section>
      <button class="collapse" aria-label="Collapse ribbon">${ico(11, 7, svg`<path d="M.5 6l5-5 5 5" stroke="#444"/>`)}</button>
    </div>`;
  }

  private renderRow(r: Row) {
    const [n, op, date, desc, bank, acc, amt] = r;
    return html`<tr class=${classMap({ even: n % 2 === 0, sel: n <= lastSelected, last: n === lastSelected })}>
      <th scope="row">${n}</th>
      <td class=${classMap({ op: true, blue: n > 31 && n < 44, lilac: n === 44 })}>${op}</td>
      <td class="date">${date}</td><td>${desc}</td><td></td><td>${bank}</td><td></td>
      <td class="rate">1</td><td>${acc}</td><td class="amt">${amt}</td><td></td><td></td><td></td>
    </tr>`;
  }

  private renderGrid() {
    const part = (t: string) => html`<div class="clip"><span>${t}</span></div>`;
    return html`<div class="area">
      <div class="sheet"><table>
        <colgroup><col class="c-n"><col class="c-op"><col class="c-d"><col><col class="c-s"><col class="c-s"><col class="c-s"><col class="c-s"><col class="c-acc"><col class="c-amt"><col class="c-s"><col class="c-s"><col class="c-e"></colgroup>
        <thead><tr><th>${ico(16, 11, svg`<path d="M15 3v7H8z" fill="#b4b4b4"/>`)}</th>
          ${columns.map((c) => html`<th scope="col" class=${c === "AMOUNT" ? "hot" : ""}><div class="hd"><span>${c}</span>
            ${c === "DESCR" ? nothing : html`<button class="flt" aria-label="Filter ${c}">${c === "AMOUNT"
              ? ico(9, 8, svg`<path d="M7 1v6M5.500 2.500L7 1M1 6.500h3" stroke="#556"/>`) : arrow}</button>`}</div></th>`)}
        </tr></thead>
        <tbody>
          <tr class="part sel"><th>${part("")}</th><td class="op"></td><td class="date">${part("31/03/25")}</td><td>${part("Pajak")}</td>
            <td></td><td></td><td></td><td></td><td></td><td class="amt"></td><td></td><td></td><td></td></tr>
          ${rows.map((r) => this.renderRow(r))}
        </tbody>
      </table></div>
      <button class="pasteopt">${icons.clip}(Ctrl)${arrow}</button>
      <div class="vbar"><button class="sb" aria-label="Scroll up"><span class="arrow up"></span></button><div class="vtrack"><div class="vthumb"></div></div><button class="sb" aria-label="Scroll down">${arrow}</button></div>
    </div>`;
  }

  render() {
    return html`
      <header class="title">
        <div class="quick">
          <button aria-label="Save">${icons.save}</button>
          <button class="wide" aria-label="Undo">${icons.undo}${arrow}</button>
          <button class="dim" aria-label="Redo">${icons.redo}${arrow}</button>
          <button aria-label="Paste special">${icons.pasteSpecial}</button>
          <button class="wide" aria-label="Customize toolbar">${icons.customize}</button>
        </div>
        <span>Other Payment Mulia Ramdhani 2025&nbsp; [Compatibility Mode]&nbsp; -&nbsp; Excel</span>
        <div class="win"><button class="signin">Sign in</button><button aria-label="Ribbon display">${icons.ribbonMode}</button><button aria-label="Minimize">${icons.min}</button><button aria-label="Restore">${icons.restore}</button><button aria-label="Close">${icons.close}</button></div>
      </header>
      <nav class="tabs">
        <button class="file">File</button><button class="active">Home</button>
        ${["Insert", "Page Layout", "Formulas", "Data", "Review", "View", "Developer", "Help", "Acrobat"].map((t) => html`<button>${t}</button>`)}
        <button class="design">Table Design</button>
        <button class="tell">${icons.bulb}Tell me what you want to do</button>
        <button class="share">${icons.share}Share</button>
      </nav>
      ${this.renderRibbon()}
      <div class="formula">
        <div class="box name"><input aria-label="Name box" value="I2">${arrow}</div>
        <div class="dots">${ico(2, 14, svg`<path d="M0 1h2M0 5h2M0 9h2M0 13h2" stroke="#a0a0a0" stroke-width="2"/>`)}</div>
        <div class="box fxs"><button aria-label="Cancel">${ico(11, 11, svg`<path d="M1 1l9 9M10 1l-9 9" stroke="#bbb" stroke-width="1.500"/>`)}</button><button aria-label="Enter">${ico(13, 11, svg`<path d="M1 6l3.500 4L12 1" stroke="#bbb" stroke-width="2"/>`)}</button><button class="fx">fx</button></div>
        <div class="box entry"><input aria-label="Formula" value="283646">${ico(9, 7, svg`<path d="M1 1l3.500 4L8 1" stroke="#555" stroke-width="2"/>`)}</div>
      </div>
      ${this.renderGrid()}
      <div class="sheets">
        <div class="nav"><span>◀</span><span>▶</span></div>
        ${["Other Payment", "Sheet2", "Sheet3"].map((s) => html`<button class=${classMap({ tab: true, on: s === this.sheet })} @click=${() => (this.sheet = s)}>${s}</button>`)}
        <button class="add" aria-label="New sheet">${ico(17, 17, svg`<circle cx="8.500" cy="8.500" r="7.500" stroke="#777"/><path d="M8.500 4.500v8M4.500 8.500h8" stroke="#666" stroke-width="1.500"/>`)}</button>
        <div class="hbar"><span class="grip">${ico(2, 12, svg`<path d="M0 1h2M0 5h2M0 9h2" stroke="#a0a0a0" stroke-width="2"/>`)}</span><button class="sb" aria-label="Scroll left"><span class="lf"></span></button><div class="htrack"><div class="hthumb"></div></div><button class="sb" aria-label="Scroll right"><span class="rt"></span></button></div>
      </div>
      <footer class="status">
        <span>Select destination and press ENTER or choose Paste</span>
        <div class="sums"><span>Average: 570799,7907</span><span>Count: 43</span><span>Numerical Count: 43</span><span>Sum: 24544391</span></div>
        <button class="view on" aria-label="Normal">${ico(14, 13, svg`<path d="M.5.500h12v12H.5zM4.500.5v12M8.500.5v12M.5 4.500h12M.5 8.500h12" stroke="#666"/>`)}</button>
        <button class="view" aria-label="Page layout">${ico(13, 13, svg`<path d="M.5.500h12v12H.5zM3 2.500h7v8H3zM4.500 4.500h4M4.500 6.500h4M4.500 8.500h4" stroke="#666"/>`)}</button>
        <button class="view" aria-label="Page break">${ico(13, 13, svg`<path d="M.5.500h12v12H.5zM.5 8.500h4M4.500.5v8h4v-8" stroke="#666"/>`)}</button>
        <div class="zoom"><button>−</button><input type="range" aria-label="Zoom" min="10" max="190" value="62"><button>+</button><output>70%</output></div>
      </footer>
      <div class="taskbar">
        <button class="start" aria-label="Start">${ico(16, 16, svg`<path d="M0 2.300L6.700 1.400v6.200H0zM7.500 1.300L16 0v7.600H7.500zM0 8.400h6.700v6.200L0 13.700zM7.500 8.400H16V16l-8.500-1.300z" fill="#fff"/>`)}</button>
        <div class="search">${ico(16, 16, svg`<circle cx="10" cy="6" r="5" stroke="#222" stroke-width="1.300"/><path d="M6.500 9.500L.8 15.200" stroke="#222" stroke-width="1.300"/>`)}<input aria-label="Search" placeholder="Type here to search"><span class="zeb">${zebra}</span></div>
        <div class="apps">${taskIcons.map((t) => html`<button class=${classMap({ run: t.on, cur: t.name === "Excel" })} aria-label=${t.name}>${t.art}</button>`)}</div>
        <div class="tray">
          <div class="weather">${ico(25, 22, svg`<circle cx="16" cy="7.500" r="7" fill="#f39a2b"/><path d="M6 21a5.500 5.500 0 0 1-.5-10.500A6 6 0 0 1 17 10a5.500 5.500 0 0 1 1.500 11z" fill="#a9c8f5"/>`)}<span>29°C</span><span>Berawan</span></div>
          <div class="trayico">
            ${ico(12, 8, svg`<path d="M1 7l5-5.500L11 7" stroke="#fff" stroke-width="1.200"/>`)}
            ${ico(24, 16, svg`<rect x="8" y="4.500" width="7" height="7" rx="1" stroke="#fff"/><path d="M15 7.500l2.500-2v5l-2.500-2M8 2.500c2-2 5-2 7 0M8 13.500c2 2 5 2 7 0" stroke="#fff"/>`)}
            ${ico(15, 14, svg`<path d="M1 5h2.500L7 1.500v11L3.500 9H1zM9 4.500c1.500 1.500 1.500 3.500 0 5M11 2.500c2.500 2.500 2.500 6.500 0 9" stroke="#fff"/>`)}
            ${ico(17, 15, svg`<path d="M6 2.500h10v7H4.500V6M8 13.500h5M10.500 10v3.500M1.500 1h3.500v4H1.500zM3 5v8.500h4" stroke="#fff"/>`)}
          </div>
          <div class="clock"><div>10.22</div><div>31/01/2026</div></div>
          <button aria-label="Notifications">${ico(15, 17, svg`<path d="M0 1h15v11H9.500l-3 4v-4H0z" fill="#fff"/><path d="M3 4.500h9M3 7h9M3 9.500h6" stroke="#252b20"/>`)}</button>
        </div>
      </div>`;
  }
}
